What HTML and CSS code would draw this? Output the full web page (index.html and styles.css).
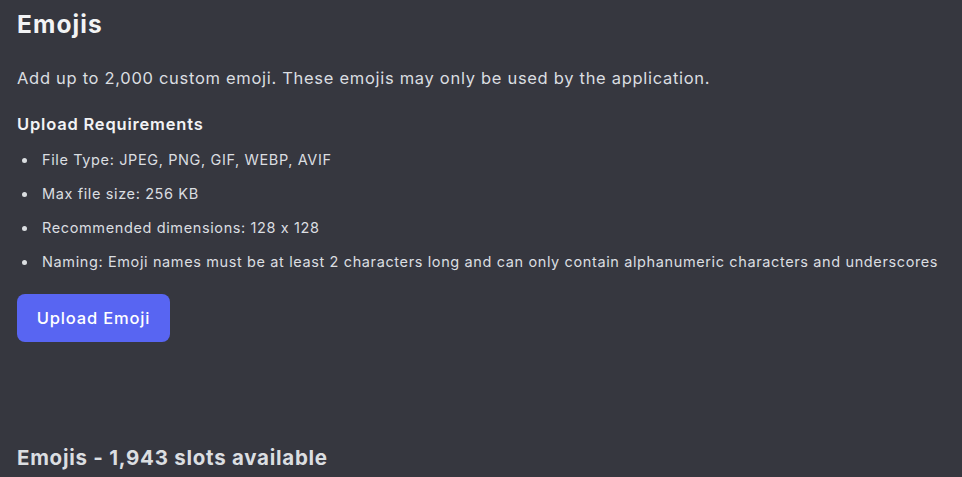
FILE: index.html
```html
<!DOCTYPE html>
<html>
<head>
<meta charset="utf-8">
<link rel="stylesheet" href="styles.css">
</head>
<body>
<div class="page">
  <h1 class="title">Emojis</h1>
  <p class="desc">Add up to 2,000 custom emoji. These emojis may only be used by the application.</p>
  <h2 class="req-title">Upload Requirements</h2>
  <ul class="req-list">
    <li>File Type: JPEG, PNG, GIF, WEBP, AVIF</li>
    <li>Max file size: 256 KB</li>
    <li>Recommended dimensions: 128 x 128</li>
    <li>Naming: Emoji names must be at least 2 characters long and can only contain alphanumeric characters and underscores</li>
  </ul>
  <button class="upload-btn">Upload Emoji</button>
  <h2 class="slots">Emojis - 1,943 slots available</h2>
</div>
</body>
</html>
```
FILE: styles.css
```css
html, body {
  margin: 0;
  padding: 0;
  background: #36373f;
  height: 100%;
  overflow: hidden;
}
.page {
  padding: 8px 17px 0 17px;
  font-family: "Inter", sans-serif;
  font-feature-settings: "calt" 0;
  color: #dbdee1;
}
.title {
  margin: 0;
  font-size: 24.5px;
  line-height: 32px;
  font-weight: 700;
  letter-spacing: 1.1px;
  color: #f2f3f5;
}
.desc {
  margin: 26px 0 0 0;
  font-size: 16.5px;
  line-height: 24px;
  letter-spacing: 0.7px;
  color: #dbdee1;
}
.req-title {
  margin: 22px 0 0 0;
  font-size: 16.5px;
  line-height: 24px;
  font-weight: 600;
  letter-spacing: 0.8px;
  color: #f2f3f5;
}
.req-list {
  margin: 14px 0 0 0;
  padding: 0 0 0 25px;
  list-style: none;
  font-size: 14.5px;
  line-height: 20px;
  letter-spacing: 0.62px;
  color: #dbdee1;
}
.req-list li {
  position: relative;
  margin-bottom: 14px;
}
.req-list li::before {
  content: "";
  position: absolute;
  left: -20px;
  top: 8px;
  width: 5px;
  height: 5px;
  border-radius: 50%;
  background: #dbdee1;
}
.upload-btn {
  display: block;
  margin-top: 22px;
  width: 153px;
  height: 48px;
  border: none;
  border-radius: 8px;
  background: #5865f2;
  color: #ffffff;
  font-family: "Inter", sans-serif;
  font-size: 16.5px;
  font-weight: 500;
  letter-spacing: 0.83px;
  padding: 0;
}
.slots {
  margin: 102px 0 0 0;
  font-size: 20.5px;
  line-height: 28px;
  font-weight: 700;
  letter-spacing: 0.73px;
  color: #dbdee1;
}
```
